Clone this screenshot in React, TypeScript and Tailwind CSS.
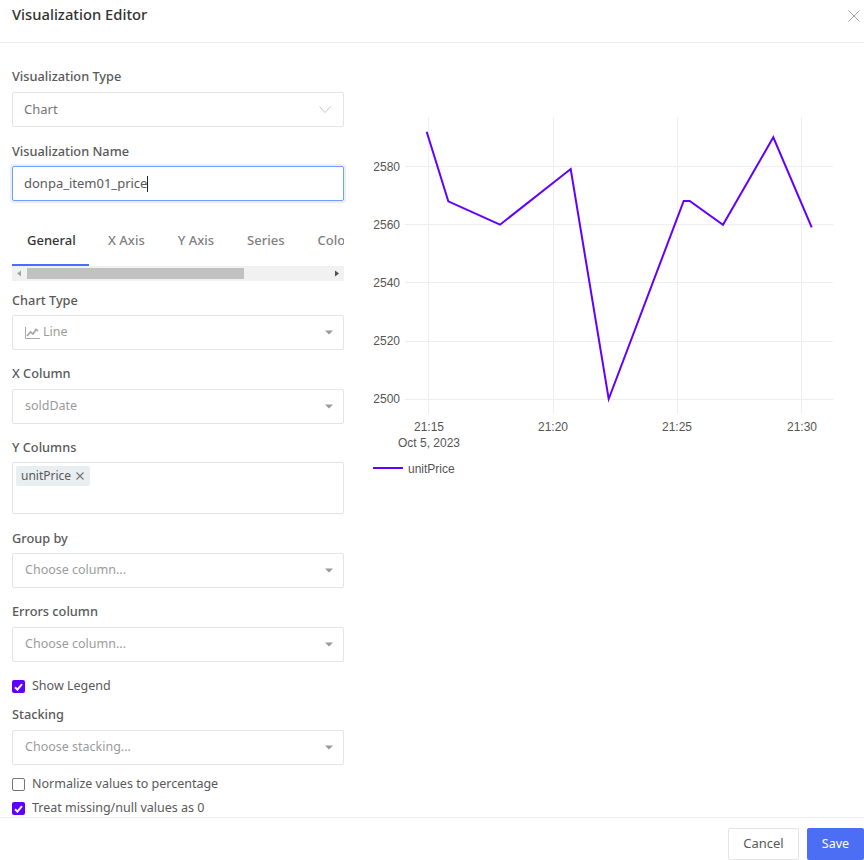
import React from "react";

const fieldBox = "flex h-[35px] items-center rounded-[2px] border border-[#e4e4e4] bg-white";

const Caret = () => (
  <svg width="8" height="5" viewBox="0 0 8 5" className="ml-auto mr-[10px]">
    <path d="M0 0.5h8L4 4.5z" fill="#9a9a9a" />
  </svg>
);

const Label = ({ children, className }: { children: React.ReactNode; className: string }) => (
  <div className={`h-5 text-[12.75px] font-medium leading-5 text-[#595959] ${className}`}>{children}</div>
);

const SelectField = ({
  label,
  value,
  icon,
  gap,
  after,
}: {
  label: string;
  value: string;
  icon?: boolean;
  gap: string;
  after: string;
}) => (
  <div className={after}>
    <Label className={gap}>{label}</Label>
    <div className={fieldBox}>
      <span className="flex items-center gap-[3px] pl-3 text-[12.5px] text-[#9b9b9b]">
        {icon && (
          <svg width="15" height="12" viewBox="0 0 15 12" fill="none">
            <path d="M0.5 0v11.5H15" stroke="#a8a8a8" />
            <path d="M2 9l3.5-4 2.5 2 3-4.5 2 1.5" stroke="#a8a8a8" strokeWidth="1.8" />
          </svg>
        )}
        {value}
      </span>
      <Caret />
    </div>
  </div>
);

const Check = ({ on, label, className }: { on: boolean; label: string; className: string }) => (
  <div className={`flex h-5 items-center gap-[7px] text-[12.5px] text-[#595959] ${className}`}>
    {on ? (
      <span className="mt-px flex h-[13px] w-[13px] items-center justify-center rounded-[2px] bg-[#6200ff]">
        <svg width="9" height="8" viewBox="0 0 9 8" fill="none">
          <path d="M1 4.2l2.4 2.4L8 1.2" stroke="#fff" strokeWidth="2" />
        </svg>
      </span>
    ) : (
      <span className="mt-px h-[13px] w-[13px] rounded-[2px] border border-[#767676] bg-white" />
    )}
    {label}
  </div>
);

const points = "426.7,131.7 448.3,201.3 500,224.7 570.7,169 608.7,399 683.7,201 689.7,201 723,224.7 773.3,137.3 811.7,227.3";

const Chart = () => (
  <svg width="504" height="390" viewBox="360 100 504 390" className="mt-[57px] block">
    {[166.5, 224.5, 282.5, 341.5, 399.5].map((y) => (
      <line key={y} x1="405" x2="833" y1={y} y2={y} stroke="#eeeeee" />
    ))}
    {[428.5, 553.5, 677.5, 801.5].map((x) => (
      <line key={x} x1={x} x2={x} y1="117" y2="414" stroke="#eeeeee" />
    ))}
    <polyline points={points} fill="none" stroke="#6200ff" strokeWidth="2" />
    <g fontFamily="'Liberation Sans', sans-serif" fontSize="12" fill="#555555">
      {[["2580", 171], ["2560", 229], ["2540", 287], ["2520", 345], ["2500", 403]].map(([t, y]) => (
        <text key={t} x="400" y={y} textAnchor="end">{t}</text>
      ))}
      {[["21:15", 429], ["21:20", 553], ["21:25", 677], ["21:30", 802]].map(([t, x]) => (
        <text key={t} x={x} y="431" textAnchor="middle">{t}</text>
      ))}
      <text x="429" y="447" textAnchor="middle">Oct 5, 2023</text>
      <text x="408" y="473">unitPrice</text>
    </g>
    <line x1="373" x2="403" y1="468" y2="468" stroke="#6200ff" strokeWidth="2" />
  </svg>
);

export default function App() {
  return (
    <div className="flex h-[860px] w-[864px] flex-col overflow-hidden bg-white font-['Noto_Sans',sans-serif]">
      {/* Header */}
      <div className="flex h-[43px] shrink-0 items-start justify-between border-b border-[#eeeeee] pl-3 pr-[4px]">
        <h1 className="mt-[4px] text-[14.75px] font-medium leading-5 text-[#323232]">Visualization Editor</h1>
        <svg width="12" height="12" viewBox="0 0 12 12" className="mt-[10px]">
          <path d="M0.5 0.5l11 11M11.5 0.5l-11 11" stroke="#a0a0a0" />
        </svg>
      </div>

      <div className="flex min-h-0 flex-1 overflow-hidden">
        {/* Left column */}
        <div className="ml-3 w-[332px] shrink-0 pt-[23px]">
          <div className="mb-[14px]">
            <Label className="mb-[6px]">Visualization Type</Label>
            <div className={fieldBox}>
              <span className="pl-[11px] pt-px text-[13px] text-[#767676]">Chart</span>
              <svg width="12" height="7" viewBox="0 0 12 7" className="ml-auto mr-3" fill="none">
                <path d="M0.5 0.5L6 6.5l5.5-6" stroke="#c4c4c4" />
              </svg>
            </div>
          </div>
          <Label className="mb-[5px]">Visualization Name</Label>
          <div className="flex h-[35px] items-center rounded-[2px] border border-[#6ea0f7] pl-[11px] text-[13px] text-[#595959] shadow-[0_0_0_2px_rgba(76,110,245,0.12)]">
            donpa_item01_price
            <span className="h-4 w-px bg-[#222222]" />
          </div>

          {/* Tabs */}
          <div className="mt-[26px] flex h-[39px] overflow-hidden">
            {["General", "X Axis", "Y Axis", "Series", "Colors"].map((tab, i) => (
              <div
                key={tab}
                className={`shrink-0 pt-[3px] text-[13px] leading-5 font-medium ${
                  i === 0
                    ? "mr-[4px] h-[39px] w-[77px] border-b-2 border-[#4c6ef5] pl-[15px] text-[#333333]"
                    : "mr-[3px] px-[15px] text-[#808080]"
                }`}
              >
                {tab}
              </div>
            ))}
          </div>
          <div className="mb-[9px] flex h-[15px] items-center bg-[#f1f1f1]">
            <svg width="15" height="15" viewBox="0 0 15 15">
              <path d="M9 4.5v6L5 7.5z" fill="#a3a3a3" />
            </svg>
            <div className="h-[11px] w-[217px] bg-[#c1c1c1]" />
            <svg width="15" height="15" viewBox="0 0 15 15" className="ml-auto">
              <path d="M6 4.5v6l4-3z" fill="#505050" />
            </svg>
          </div>

          <SelectField label="Chart Type" value="Line" icon gap="mb-[5px]" after="mb-[13px]" />
          <SelectField label="X Column" value="soldDate" gap="mb-[6px]" after="mb-[13px]" />

          <div className="mb-[14px]">
            <Label className="mb-[5px]">Y Columns</Label>
            <div className="h-[52px] rounded-[2px] border border-[#e4e4e4] p-[3px]">
              <span className="flex h-5 w-[74px] items-center rounded-[2px] bg-[#e9eef0] pl-[5px] text-xs text-[#595959]">
                unitPrice
                <svg width="8" height="8" viewBox="0 0 8 8" className="ml-[5px]">
                  <path d="M0.5 0.5l7 7M7.5 0.5l-7 7" stroke="#777777" strokeWidth="1.2" />
                </svg>
              </span>
            </div>
          </div>

          <SelectField label="Group by" value="Choose column..." gap="mb-[5px]" after="mb-[13px]" />
          <SelectField label="Errors column" value="Choose column..." gap="mb-[6px]" after="mb-[14px]" />
          <Check on label="Show Legend" className="mb-[8px]" />
          <SelectField label="Stacking" value="Choose stacking..." gap="mb-[6px]" after="mb-[9px]" />
          <Check on={false} label="Normalize values to percentage" className="mb-[4px]" />
          <Check on label="Treat missing/null values as 0" className="" />
        </div>

        {/* Chart */}
        <div className="ml-4 min-w-0 flex-1">
          <Chart />
        </div>
      </div>

      {/* Footer */}
      <div className="flex h-[43px] shrink-0 items-start justify-end gap-2 border-t border-[#eeeeee] pt-[10px]">
        <button className="h-8 w-[71px] rounded-[2px] border border-[#e4e4e4] bg-white text-[13px] text-[#595959]">Cancel</button>
        <button className="h-8 w-[57px] rounded-[2px] bg-[#4c6ef5] text-[12.5px] text-white">Save</button>
      </div>
    </div>
  );
}
